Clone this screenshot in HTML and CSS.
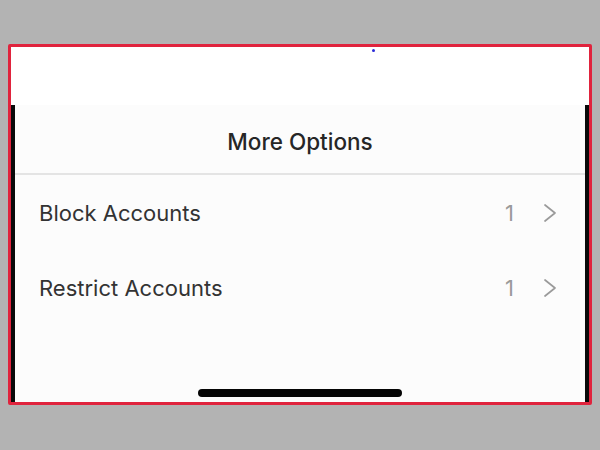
FILE: index.html
```html
<!DOCTYPE html>
<html>
<head>
<meta charset="utf-8">
<link rel="stylesheet" href="styles.css">
</head>
<body>
<div class="frame">
  <div class="top"><span class="dot"></span></div>
  <div class="screen">
    <div class="header">More Options</div>
    <div class="row">
      <span class="label">Block Accounts</span>
      <span class="count">1</span>
      <svg class="chev" width="14" height="20" viewBox="0 0 14 20"><path d="M2 2 L12 10 L2 18" fill="none" stroke="#9a9a9a" stroke-width="1.7" stroke-linecap="round" stroke-linejoin="round"/></svg>
    </div>
    <div class="row">
      <span class="label">Restrict Accounts</span>
      <span class="count">1</span>
      <svg class="chev" width="14" height="20" viewBox="0 0 14 20"><path d="M2 2 L12 10 L2 18" fill="none" stroke="#9a9a9a" stroke-width="1.7" stroke-linecap="round" stroke-linejoin="round"/></svg>
    </div>
    <div class="home"></div>
  </div>
</div>
</body>
</html>
```
FILE: styles.css
```css
html, body {
  margin: 0;
  padding: 0;
  background: #b3b3b3;
  width: 600px;
  height: 450px;
  overflow: hidden;
  font-family: "Inter", "Liberation Sans", sans-serif;
}
.frame {
  margin: 44px 8px 0 8px;
  width: 578px;
  height: 355px;
  border: 3px solid #e0233d;
  border-radius: 2px;
  background: #ffffff;
  display: flex;
  flex-direction: column;
}
.top {
  height: 58px;
  background: #ffffff;
  position: relative;
  flex: none;
}
.dot {
  position: absolute;
  left: 361px;
  top: 2px;
  width: 3px;
  height: 3px;
  border-radius: 50%;
  background: #2b2bd8;
}
.screen {
  flex: 1;
  border-left: 4px solid #0a0a0a;
  border-right: 4px solid #0a0a0a;
  background: #fcfcfc;
  display: flex;
  flex-direction: column;
}
.header {
  height: 70px;
  border-bottom: 2px solid #e4e4e4;
  display: flex;
  align-items: center;
  justify-content: center;
  font-size: 22.5px;
  font-weight: 500;
  color: #262626;
  padding-top: 4px;
  box-sizing: border-box;
}
.row {
  height: 75px;
  display: flex;
  align-items: center;
  padding: 0 28px 0 24px;
  box-sizing: border-box;
  font-size: 22px;
  color: #333333;
}
.label {
  flex: 1;
}
.count {
  color: #9a9a9a;
  margin-right: 29px;
}
.chev {
  display: block;
}
.home {
  margin-top: auto;
  margin-bottom: 5px;
  align-self: center;
  width: 204px;
  height: 8px;
  border-radius: 4px;
  background: #050505;
}
```
